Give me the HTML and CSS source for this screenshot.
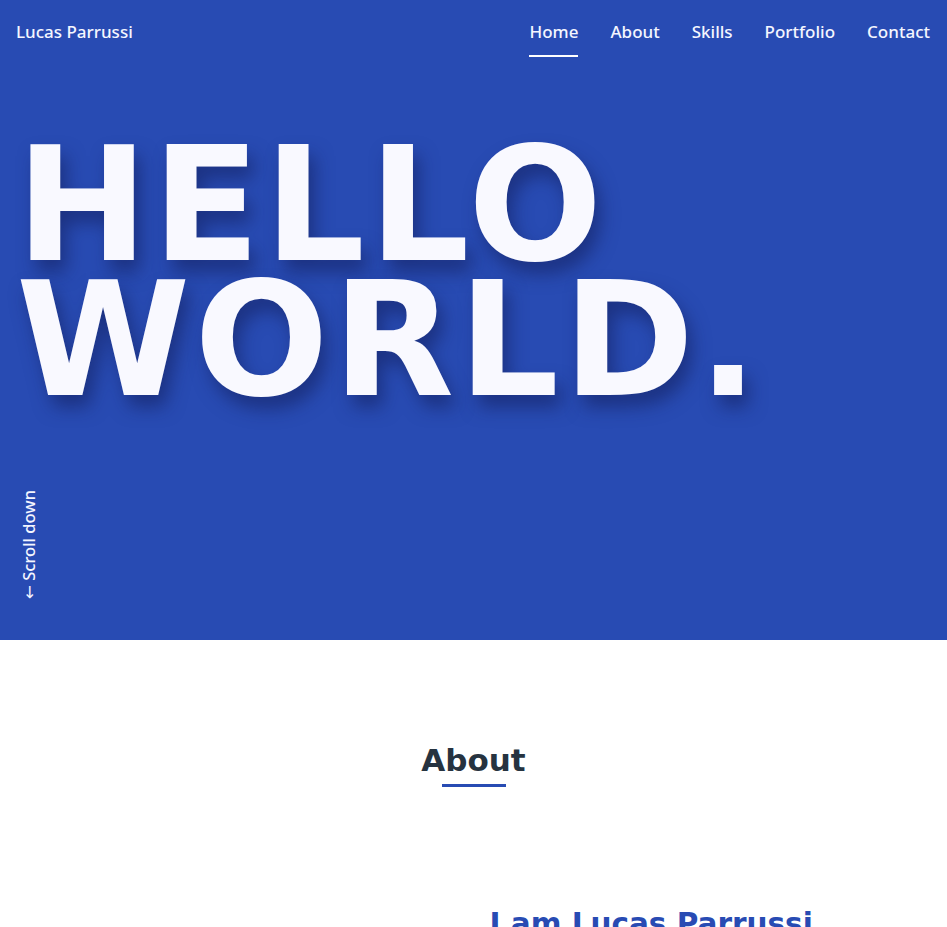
FILE: index.html
```html
<!DOCTYPE html>
<html lang="en">
<head>
<meta charset="utf-8">
<title>Lucas Parrussi</title>
<link rel="stylesheet" href="styles.css">
</head>
<body>
<section class="hero">
  <header class="topbar">
    <a class="brand" href="#">Lucas Parrussi</a>
    <nav class="nav">
      <a class="nav-link active" href="#">Home</a>
      <a class="nav-link" href="#">About</a>
      <a class="nav-link" href="#">Skills</a>
      <a class="nav-link" href="#">Portfolio</a>
      <a class="nav-link" href="#">Contact</a>
    </nav>
  </header>
  <h1 class="hero-title"><span class="hero-line">HELLO</span><span class="hero-line">WORLD.</span></h1>
  <div class="scroll">&larr; Scroll down</div>
</section>
<section class="about">
  <h2 class="section-title">About</h2>
  <div class="about-grid">
    <div class="about-media"></div>
    <div class="about-text">
      <h3 class="about-name">I am Lucas Parrussi</h3>
    </div>
  </div>
</section>
</body>
</html>
```
FILE: styles.css
```css
* { box-sizing: border-box; }
html, body { margin: 0; padding: 0; }
body {
  font-family: "DejaVu Sans", "Liberation Sans", sans-serif;
  background: #ffffff;
  overflow: hidden;
}
a { text-decoration: none; color: inherit; }

.hero {
  background: #284bb3;
  color: #f8f8ff;
  height: 640px;
  display: flex;
  flex-direction: column;
}
.topbar {
  display: flex;
  justify-content: space-between;
  align-items: flex-start;
  padding: 0 16px;
  height: 64px;
}
.brand {
  font-family: "Noto Sans", "DejaVu Sans", sans-serif;
  font-weight: 500;
  font-size: 17px;
  line-height: 20px;
  padding-top: 22px;
  color: #f4f6ff;
}
.nav {
  display: flex;
  gap: 32px;
  margin-right: 1px;
}
.nav-link {
  font-family: "Noto Sans", "DejaVu Sans", sans-serif;
  font-weight: 500;
  font-size: 17px;
  line-height: 20px;
  padding-top: 22px;
  padding-bottom: 13px;
  border-bottom: 2px solid transparent;
  color: #f4f6ff;
}
.nav-link.active { border-bottom-color: #ffffff; }

.hero-title {
  margin: 74px 0 0 16px;
  font-family: "DejaVu Sans", sans-serif;
  font-weight: 700;
  font-size: 158px;
  line-height: 135px;
  letter-spacing: 4px;
  color: #f9f9ff;
  text-shadow: 6px 12px 18px rgba(18, 30, 90, 0.55);
}
.hero-line { display: block; height: 135px; }
.scroll {
  margin-top: auto;
  margin-bottom: 41px;
  margin-left: 20px;
  writing-mode: vertical-rl;
  transform: rotate(180deg);
  font-family: "Noto Sans", "DejaVu Sans", sans-serif;
  font-weight: 500;
  font-size: 16.5px;
  line-height: 18px;
  color: #f4f6ff;
}

.about {
  padding-top: 100px;
}
.section-title {
  margin: 0 auto;
  width: max-content;
  font-size: 31px;
  line-height: 40px;
  font-weight: 700;
  color: #263340;
  padding-bottom: 9px;
}
.section-title::after {
  content: "";
  display: block;
  width: 64px;
  height: 3px;
  background: #284bb3;
  margin: 4px auto 0;
}
.about-grid {
  display: grid;
  grid-template-columns: 1fr 1fr;
  margin-top: 110px;
}
.about-text { padding-left: 16px; }
.about-name {
  margin: 0;
  font-size: 29.5px;
  line-height: 36px;
  font-weight: 700;
  color: #284bb3;
}
```
